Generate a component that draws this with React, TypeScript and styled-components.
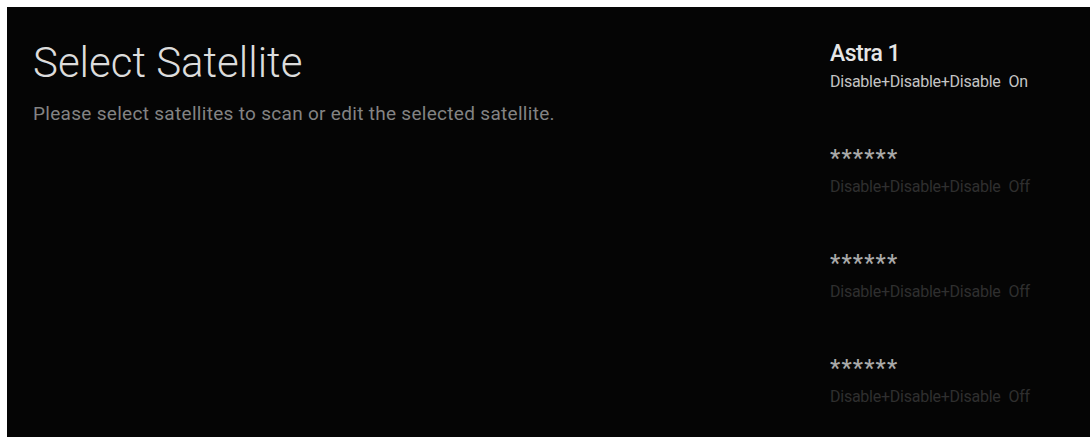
import React from 'react';
import styled, { createGlobalStyle } from 'styled-components';

interface Satellite {
  name: string;
  lnb: string;
  enabled: boolean;
}

const satellites: Satellite[] = [
  { name: 'Astra 1', lnb: 'Disable+Disable+Disable', enabled: true },
  { name: '******', lnb: 'Disable+Disable+Disable', enabled: false },
  { name: '******', lnb: 'Disable+Disable+Disable', enabled: false },
  { name: '******', lnb: 'Disable+Disable+Disable', enabled: false },
];

const GlobalStyle = createGlobalStyle`
  html, body {
    margin: 0;
    padding: 0;
    background: #ffffff;
    font-family: Roboto, "Liberation Sans", sans-serif;
  }
`;

/**
 * 衛星選択画面
 */
const App: React.FC = () => {
  return (
    <>
      <GlobalStyle />
      <Screen>
        <Panel>
          <Intro>
            <Title>Select Satellite</Title>
            <Hint>Please select satellites to scan or edit the selected satellite.</Hint>
          </Intro>

          <SatelliteList>
            {satellites.map((sat, i) => (
              <SatelliteItem key={i}>
                <SatName isStars={!sat.enabled}>{sat.name}</SatName>
                <SatDetail isActive={sat.enabled}>
                  {sat.lnb}
                  <State>{sat.enabled ? 'On' : 'Off'}</State>
                </SatDetail>
              </SatelliteItem>
            ))}
          </SatelliteList>
        </Panel>
      </Screen>
    </>
  );
};

const Screen = styled.div`
  width: 1090px;
  height: 437px;
  padding: 7px 0 0 7px;
  box-sizing: border-box;
  overflow: hidden;
`;

const Panel = styled.main`
  display: grid;
  grid-template-columns: 797px 1fr;
  height: 430px;
  padding: 32px 0 0 26px;
  box-sizing: border-box;
  background-color: #050505;
`;

const Intro = styled.section`
  display: flex;
  flex-direction: column;
`;

const Title = styled.h1`
  margin: 0;
  font-size: 42px;
  line-height: 48px;
  font-weight: 300;
  color: #dcdcdc;
`;

const Hint = styled.p`
  margin: 16px 0 0;
  font-size: 19px;
  line-height: 22px;
  font-weight: 400;
  letter-spacing: 0.3px;
  color: #838383;
`;

const SatelliteList = styled.ul`
  display: flex;
  flex-direction: column;
  gap: 53px;
  margin: 1px 0 0;
  padding: 0;
  list-style: none;
`;

const SatelliteItem = styled.li`
  display: flex;
  flex-direction: column;
  gap: 4px;
`;

const SatName = styled.div<{ isStars: boolean }>`
  font-size: 23px;
  line-height: 28px;
  font-weight: 500;
  letter-spacing: ${(props) => (props.isStars ? '1.2px' : '-0.5px')};
  color: ${(props) => (props.isStars ? '#a9a9a9' : '#e6e6e6')};
`;

const SatDetail = styled.div<{ isActive: boolean }>`
  font-size: 16px;
  line-height: 20px;
  font-weight: 400;
  letter-spacing: -0.25px;
  white-space: nowrap;
  color: ${(props) => (props.isActive ? '#c4c4c4' : '#2f2f2f')};
`;

const State = styled.span`
  margin-left: 8px;
`;

export default App;
